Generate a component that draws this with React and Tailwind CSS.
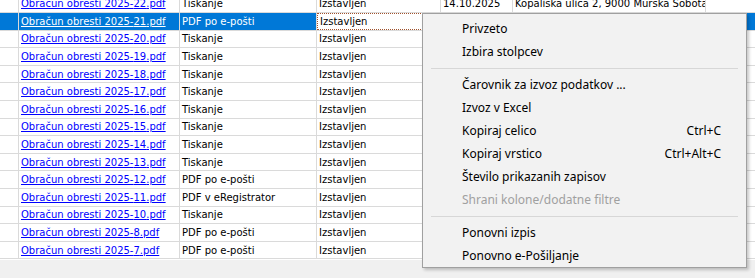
import React from "react";

const rows = [
  { n: "22", mode: "Tiskanje", date: "14.10.2025", addr: "Kopališka ulica 2, 9000 Murska Sobota" },
  { n: "21", mode: "PDF po e-pošti", selected: true },
  { n: "20", mode: "Tiskanje" },
  { n: "19", mode: "Tiskanje" },
  { n: "18", mode: "Tiskanje" },
  { n: "17", mode: "Tiskanje" },
  { n: "16", mode: "Tiskanje" },
  { n: "15", mode: "Tiskanje" },
  { n: "14", mode: "Tiskanje" },
  { n: "13", mode: "Tiskanje" },
  { n: "12", mode: "PDF po e-pošti" },
  { n: "11", mode: "PDF v eRegistrator" },
  { n: "10", mode: "Tiskanje" },
  { n: "8", mode: "PDF po e-pošti" },
  { n: "7", mode: "PDF po e-pošti" },
];

const menu = [
  { label: "Privzeto" },
  { label: "Izbira stolpcev" },
  { sep: true },
  { label: "Čarovnik za izvoz podatkov ..." },
  { label: "Izvoz v Excel" },
  { label: "Kopiraj celico", key: "Ctrl+C" },
  { label: "Kopiraj vrstico", key: "Ctrl+Alt+C" },
  { label: "Število prikazanih zapisov" },
  { label: "Shrani kolone/dodatne filtre", disabled: true },
  { sep: true },
  { label: "Ponovni izpis" },
  { label: "Ponovno e-Pošiljanje" },
];

const GridRow = ({ row }) => {
  const sel = row.selected;
  const cell = "h-full flex items-center pl-[2px] border-r border-[#dadada] whitespace-nowrap overflow-hidden";
  const blue = sel ? "bg-[#0078d7] text-white" : "";
  return (
    <div className="flex h-[17.6px] border-b border-[#dadada]">
      <div className={`${cell} w-[19px] shrink-0 ${blue}`} />
      <div className={`${cell} w-[161px] shrink-0 ${blue}`}>
        <span className={`underline ${sel ? "text-white" : "text-[#0000ff]"}`}>
          Obračun obresti 2025-{row.n}.pdf
        </span>
      </div>
      <div className={`${cell} w-[137px] shrink-0 ${blue}`}>{row.mode}</div>
      {sel ? (
        <div className="h-full w-[124px] shrink-0 flex items-center pl-[2px] bg-white border border-dotted border-[#a0522d]">
          Izstavljen
        </div>
      ) : (
        <div className={`${cell} w-[124px] shrink-0`}>Izstavljen</div>
      )}
      <div className={`${cell} w-[72px] shrink-0 ${blue}`}>{row.date}</div>
      <div className={`${cell} w-[193px] shrink-0 ${blue}`}>{row.addr}</div>
      <div className={`h-full flex-1 ${blue}`} />
    </div>
  );
};

export default function App() {
  return (
    <div className="relative w-[755px] h-[278px] overflow-hidden bg-[#f0f0f0]">
      {/* grid, scrolled so the first row is cut */}
      <div className="h-[260px] overflow-hidden bg-white text-black text-[10px] font-['DejaVu_Sans',sans-serif]">
        <div className="-mt-[4.6px]">
          {rows.map((r) => (
            <GridRow key={r.n} row={r} />
          ))}
        </div>
      </div>

      {/* context menu */}
      <div className="absolute left-[422px] top-[13px] w-[325px] h-[255px] bg-[#f2f2f2] border border-[#a0a0a0] pt-[3px] shadow-[2px_2px_3px_rgba(0,0,0,0.22)] text-[12px] font-['Noto_Sans',sans-serif]">
        {menu.map((m, i) =>
          m.sep ? (
            <div key={i} className="h-[10px] flex items-center px-[8px]">
              <div className="h-px w-full bg-[#d7d7d7]" />
            </div>
          ) : (
            <div
              key={i}
              className={`h-[23px] flex items-center justify-between pl-[39px] pr-[25px] ${
                m.disabled ? "text-[#a0a0a0]" : "text-black"
              }`}
            >
              <span>{m.label}</span>
              {m.key && <span>{m.key}</span>}
            </div>
          )
        )}
      </div>
    </div>
  );
}
